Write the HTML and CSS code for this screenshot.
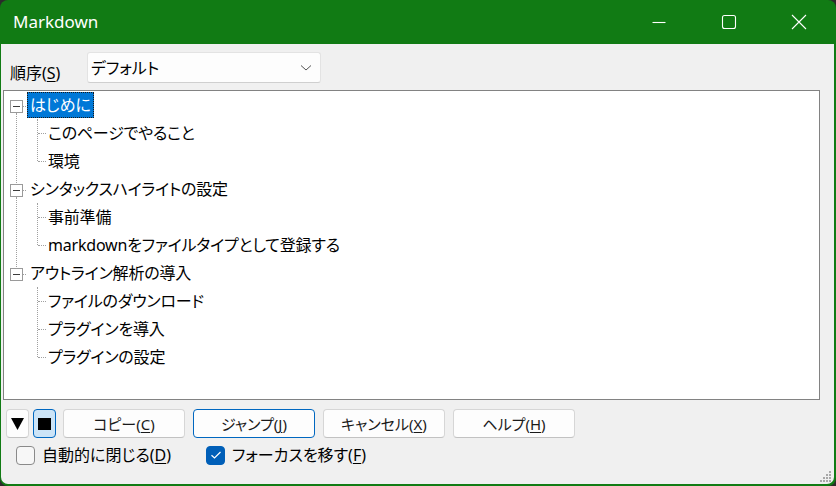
FILE: index.html
```html
<!DOCTYPE html>
<html lang="ja">
<head>
<meta charset="utf-8">
<title>Markdown</title>
<link rel="stylesheet" href="styles.css">
</head>
<body>
<div class="window">
  <div class="titlebar">
    <div class="title">Markdown</div>
    <div class="controls">
      <div class="ctl"><svg width="16" height="16" viewBox="0 0 16 16"><path d="M1.5 8.5h13" stroke="#fff" stroke-width="1.1"/></svg></div>
      <div class="ctl"><svg width="16" height="16" viewBox="0 0 16 16"><rect x="1.5" y="1.5" width="13" height="13" rx="2" fill="none" stroke="#fff" stroke-width="1.1"/></svg></div>
      <div class="ctl"><svg width="16" height="16" viewBox="0 0 16 16"><path d="M1 1L15 15M15 1L1 15" stroke="#fff" stroke-width="1.1"/></svg></div>
    </div>
  </div>
  <div class="client">
    <div class="sortrow">
      <span class="lbl">順序(<u>S</u>)</span>
      <div class="combo">
        <span>デフォルト</span>
        <svg width="12" height="8" viewBox="0 0 12 8"><path d="M1 1.5L6 6L11 1.5" fill="none" stroke="#555" stroke-width="1"/></svg>
      </div>
    </div>
    <div class="tree">
      <ul class="roots">
        <li class="root">
          <div class="row"><span class="box"></span><span class="lab sel">はじめに</span></div>
          <ul class="children">
            <li class="row child"><span class="lab">このページでやること</span></li>
            <li class="row child"><span class="lab">環境</span></li>
          </ul>
        </li>
        <li class="root">
          <div class="row"><span class="box"></span><span class="lab">シンタックスハイライトの設定</span></div>
          <ul class="children">
            <li class="row child"><span class="lab">事前準備</span></li>
            <li class="row child"><span class="lab">markdownをファイルタイプとして登録する</span></li>
          </ul>
        </li>
        <li class="root last">
          <div class="row"><span class="box"></span><span class="lab">アウトライン解析の導入</span></div>
          <ul class="children">
            <li class="row child"><span class="lab">ファイルのダウンロード</span></li>
            <li class="row child"><span class="lab">プラグインを導入</span></li>
            <li class="row child"><span class="lab">プラグインの設定</span></li>
          </ul>
        </li>
      </ul>
    </div>
    <div class="btnrow">
      <button class="btn small" aria-label="▼"><svg width="13" height="12" viewBox="0 0 13 12"><path d="M0 0H13L6.5 12Z" fill="#000"/></svg></button>
      <button class="btn small on" aria-label="■"><svg width="13" height="12" viewBox="0 0 13 12"><rect width="13" height="12" fill="#000"/></svg></button>
      <button class="btn wide">コピー(<u>C</u>)</button>
      <button class="btn wide def">ジャンプ(<u>J</u>)</button>
      <button class="btn wide">キャンセル(<u>X</u>)</button>
      <button class="btn wide">ヘルプ(<u>H</u>)</button>
    </div>
    <div class="checkrow">
      <label class="chk first"><span class="cb"></span>自動的に閉じる(<u>D</u>)</label>
      <label class="chk"><span class="cb checked"><svg width="12" height="10" viewBox="0 0 12 10"><path d="M1.5 5.2L4.5 8L10.5 2" fill="none" stroke="#fff" stroke-width="1.2"/></svg></span>フォーカスを移す(<u>F</u>)</label>
    </div>
    <div class="grip">
      <svg width="12" height="12" viewBox="0 0 12 12" fill="#a8a8a8"><rect x="9" y="1" width="2" height="2"/><rect x="6" y="4" width="2" height="2"/><rect x="9" y="4" width="2" height="2"/><rect x="3" y="7" width="2" height="2"/><rect x="6" y="7" width="2" height="2"/><rect x="9" y="7" width="2" height="2"/><rect x="0" y="10" width="2" height="2"/><rect x="3" y="10" width="2" height="2"/><rect x="6" y="10" width="2" height="2"/><rect x="9" y="10" width="2" height="2"/></svg>
    </div>
  </div>
</div>
</body>
</html>
```

FILE: styles.css
```css
html, body {
  margin: 0;
  padding: 0;
  background: #2b2b2b;
}
body {
  width: 836px;
  height: 486px;
  overflow: hidden;
  font-family: "Noto Sans", "Noto Sans CJK JP", sans-serif;
  font-feature-settings: "palt";
  font-size: 16px;
  color: #000;
}
.window {
  width: 836px;
  height: 486px;
  box-sizing: border-box;
  background: #117b14;
  border-radius: 8px;
  padding: 0 2px 2px 1px;
  display: flex;
  flex-direction: column;
}
.titlebar {
  height: 44px;
  flex: none;
  display: flex;
  align-items: center;
  justify-content: space-between;
  color: #fff;
}
.title {
  font-family: "Noto Sans", sans-serif;
  font-size: 17px;
  padding-left: 12px;
  padding-bottom: 2px;
}
.controls {
  display: flex;
  height: 44px;
}
.ctl {
  width: 70px;
  display: flex;
  align-items: center;
  justify-content: center;
}
.client {
  flex: 1;
  background: #f0f0f0;
  border-radius: 0 0 7px 7px;
  display: flex;
  flex-direction: column;
  position: relative;
}
.sortrow {
  height: 46px;
  flex: none;
  display: flex;
  align-items: center;
  padding-left: 9px;
  box-sizing: border-box;
  padding-top: 1px;
}
.lbl {
  width: 77px;
  line-height: 20px;
  margin-top: 10px;
}
u {
  text-decoration: underline;
  text-decoration-thickness: 1px;
  text-underline-offset: 2px;
}
.combo {
  width: 234px;
  height: 31px;
  box-sizing: border-box;
  background: #fdfdfd;
  border: 1px solid #e3e3e3;
  border-bottom-color: #cfcfcf;
  border-radius: 3px;
  display: flex;
  align-items: center;
  justify-content: space-between;
  padding: 0 8px 0 3px;
  line-height: 20px;
}
.tree {
  margin: 0 14px 0 2px;
  height: 310px;
  flex: none;
  box-sizing: border-box;
  border: 1px solid #828282;
  background: #fff;
  padding: 0 1px;
}
.tree ul {
  list-style: none;
  margin: 0;
  padding: 0;
}
.root {
  position: relative;
}
.root::before {
  content: "";
  position: absolute;
  left: 11px;
  top: 22px;
  bottom: -8px;
  border-left: 1px dotted #a0a0a0;
}
.root.last::before {
  display: none;
}
.row {
  height: 28px;
  display: flex;
  align-items: center;
  line-height: 20px;
  position: relative;
}
.lab {
  padding: 3px 3px 3px;
  white-space: nowrap;
  letter-spacing: -0.2px;
}
.root > .row {
  padding-left: 5px;
}
.box {
  width: 13px;
  height: 13px;
  box-sizing: border-box;
  border: 1px solid #9a9a9a;
  background: #fff;
  position: relative;
  margin-right: 4px;
  margin-top: 3px;
}
.box::before {
  content: "";
  position: absolute;
  left: 2px;
  right: 2px;
  top: 5px;
  height: 1px;
  background: #3c3c3c;
}
.box::after {
  content: "";
  position: absolute;
  left: 12px;
  top: 5px;
  width: 3px;
  border-top: 1px dotted #a0a0a0;
}
.lab.sel {
  background: #0078d7;
  color: #fff;
  outline: 1px dotted #1a1a1a;
  outline-offset: -1px;
}
.children {
  position: relative;
}
.children::before {
  content: "";
  position: absolute;
  left: 32px;
  top: 0;
  bottom: 14px;
  border-left: 1px dotted #a0a0a0;
}
.child {
  padding-left: 40px;
}
.child::before {
  content: "";
  position: absolute;
  left: 33px;
  top: 14px;
  width: 8px;
  border-top: 1px dotted #a0a0a0;
}
.btnrow {
  display: flex;
  margin-top: 9px;
  padding-left: 5px;
  height: 29px;
  flex: none;
}
.btn {
  font-family: "Noto Sans", "Noto Sans CJK JP", sans-serif;
  font-feature-settings: "palt";
  font-size: 15px;
  height: 29px;
  box-sizing: border-box;
  background: #fdfdfd;
  border: 1px solid #d6d6d6;
  border-bottom-color: #c2c2c2;
  border-radius: 4px;
  color: #1a1a1a;
  padding: 0;
  margin-right: 8px;
  line-height: 20px;
  display: flex;
  align-items: center;
  justify-content: center;
}
.btn svg {
  display: block;
}
.btn.small {
  width: 23px;
  margin-right: 4px;
}
.btn.small.on {
  background: #cce4f7;
  border-color: #0067c0;
  margin-right: 7px;
}
.btn.wide {
  width: 122px;
}
.btn.def {
  border-color: #0067c0;
}
.checkrow {
  display: flex;
  align-items: center;
  padding-left: 15px;
  margin-top: 7px;
  height: 20px;
}
.chk {
  display: flex;
  align-items: center;
  line-height: 20px;
}
.chk.first {
  margin-right: 35px;
}
.cb {
  width: 19px;
  height: 19px;
  box-sizing: border-box;
  border: 1px solid #8a8a8a;
  border-radius: 4px;
  background: #f7f7f7;
  margin-right: 7px;
  display: flex;
  align-items: center;
  justify-content: center;
}
.cb.checked {
  background: #005fb8;
  border-color: #005fb8;
}
.grip {
  position: absolute;
  right: 2px;
  bottom: 2px;
  width: 12px;
  height: 12px;
}
.grip svg {
  display: block;
}
```
